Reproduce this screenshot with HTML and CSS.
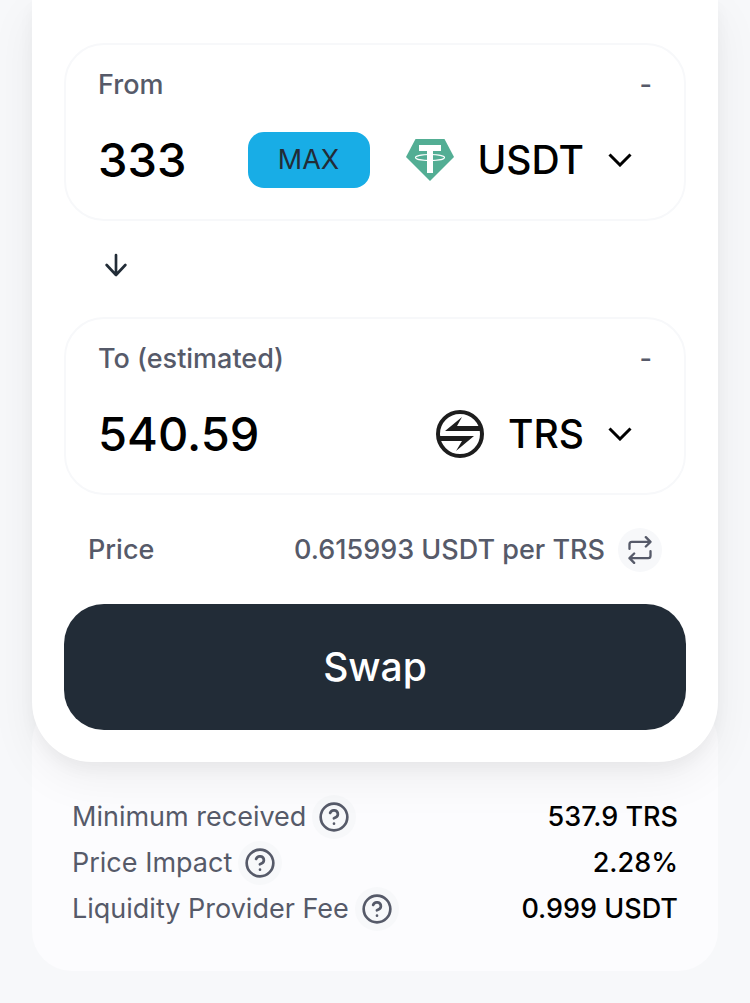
FILE: index.html
```html
<!DOCTYPE html>
<html lang="en">
<head>
    <meta charset="UTF-8">
    <meta name="viewport" content="width=device-width, initial-scale=1.0">
    <title>Swap</title>
    <link rel="stylesheet" href="styles.css">
</head>

<body>

    <!-- shared icons -->
    <svg class="sprite">
        <symbol id="question" viewBox="0 0 24 24">
            <circle cx="12" cy="12" r="10"></circle>
            <path d="M9.09 9a3 3 0 0 1 5.83 1c0 2-3 3-3 3"></path>
            <path d="M12 17h.01"></path>
        </symbol>
        <symbol id="chevron" viewBox="0 0 24 14">
            <path d="M1.5 1.5 12 12 22.5 1.5"></path>
        </symbol>
    </svg>

    <main>

        <section class="card">

            <div class="panel">
                <div class="label-row">
                    <label for="from">From</label>
                    <span>-</span>
                </div>
                <div class="input-row">
                    <input id="from" class="amount" type="text" inputmode="decimal" value="333">
                    <button class="max">MAX</button>
                    <button class="token">
                        <svg class="logo" viewBox="0 0 48 48">
                            <path fill="#53ae94" d="M9.500 3h29L48 21 24 45 0 21z"></path>
                            <path fill="#fff" d="M13 9h22v6h-8v22h-6V15h-8z"></path>
                            <ellipse cx="24" cy="21.500" rx="14.500" ry="3" fill="none" stroke="#fff" stroke-width="1.200"></ellipse>
                        </svg>
                        <span>USDT</span>
                        <svg class="chevron"><use href="#chevron"></use></svg>
                    </button>
                </div>
            </div>

            <div class="switch-row">
                <button class="switch" aria-label="Switch tokens">
                    <svg viewBox="0 0 24 24"><path d="M12 4.500v15M19 12l-7 7.500L5 12"></path></svg>
                </button>
            </div>

            <div class="panel">
                <div class="label-row">
                    <label for="to">To (estimated)</label>
                    <span>-</span>
                </div>
                <div class="input-row">
                    <input id="to" class="amount" type="text" inputmode="decimal" value="540.59">
                    <button class="token">
                        <svg class="logo" viewBox="0 0 48 48">
                            <circle cx="24" cy="24" r="22" fill="none" stroke="#1d1d1d" stroke-width="4"></circle>
                            <path fill="#1d1d1d" d="M9 21 26 7l-5 9h24v5zM38 26 20 41l6-10H3v-5z"></path>
                        </svg>
                        <span>TRS</span>
                        <svg class="chevron"><use href="#chevron"></use></svg>
                    </button>
                </div>
            </div>

            <div class="price-row">
                <span>Price</span>
                <span class="price">0.615993 USDT per TRS</span>
                <button class="round" aria-label="Invert price">
                    <svg class="repeat" viewBox="0 0 24 24">
                        <path d="m17 1 4 4-4 4M3 11V7a2 2 0 0 1 2-2h16M7 23l-4-4 4-4M21 13v4a2 2 0 0 1-2 2H3"></path>
                    </svg>
                </button>
            </div>

            <button class="swap">Swap</button>

        </section>

        <dl class="details">
            <div>
                <dt>Minimum received <button class="round" aria-label="About minimum received"><svg><use href="#question"></use></svg></button></dt>
                <dd>537.9 TRS</dd>
            </div>
            <div>
                <dt>Price Impact <button class="round" aria-label="About price impact"><svg><use href="#question"></use></svg></button></dt>
                <dd>2.28%</dd>
            </div>
            <div>
                <dt>Liquidity Provider Fee <button class="round" aria-label="About the liquidity provider fee"><svg><use href="#question"></use></svg></button></dt>
                <dd>0.999 USDT</dd>
            </div>
        </dl>

    </main>

</body>
</html>
```
FILE: styles.css
```css
* {
    box-sizing: border-box;
}

body {
    margin: 0;
    background-color: #f7f8fa;
    color: #000;
    font-family: Inter, sans-serif;
    font-size: 27px;
    font-weight: 500;
    line-height: 32px;
}

main {
    padding: 0 32px 32px;
}

button,
input {
    border: 0;
    padding: 0;
    background: none;
    color: inherit;
    font: inherit;
}

button {
    cursor: pointer;
}

svg {
    display: block;
    fill: none;
    stroke: currentColor;
    stroke-linecap: round;
    stroke-linejoin: round;
    stroke-width: 2;
}

.sprite {
    display: none;
}

.card {
    position: relative;
    padding: 43px 32px 32px;
    background-color: #fff;
    border-radius: 0 0 60px 60px;
    box-shadow: 0 0 2px rgba(0, 0, 0, 0.01), 0 8px 16px rgba(0, 0, 0, 0.04),
        0 16px 48px rgba(0, 0, 0, 0.06);
}

.panel {
    border: 2px solid #f7f8fa;
    border-radius: 40px;
    padding: 24px 32px 31px;
}

.label-row {
    display: flex;
    justify-content: space-between;
    color: #565a69;
}

.input-row {
    display: flex;
    align-items: center;
    height: 56px;
    margin-top: 31px;
    padding-right: 20px;
}

.amount {
    flex: 1;
    min-width: 0;
    font-size: 47px;
    line-height: 56px;
    outline: none;
}

.max {
    width: 122px;
    height: 56px;
    margin-right: 36px;
    border-radius: 16px;
    background-color: #18ade6;
    color: #222c37;
    font-weight: 400;
}

.token {
    display: flex;
    align-items: center;
    font-size: 39px;
    line-height: 48px;
}

.token svg {
    stroke: none;
}

.token .logo {
    width: 48px;
    height: 48px;
    margin-right: 24px;
}

.token .chevron {
    width: 24px;
    height: 14px;
    margin-left: 24px;
    stroke: #000;
    stroke-width: 3;
    stroke-linecap: butt;
    stroke-linejoin: miter;
}

.switch-row {
    display: flex;
    padding: 28px 36px 36px;
}

.switch {
    height: 32px;
    color: #222c37;
}

.switch svg {
    width: 32px;
    height: 32px;
}

.price-row {
    display: flex;
    align-items: center;
    padding: 33px 24px 32px;
    color: #565a69;
}

.price {
    margin-left: auto;
}

.round {
    display: flex;
    align-items: center;
    justify-content: center;
    width: 44px;
    height: 44px;
    margin-left: 13px;
    border-radius: 50%;
    background-color: #f7f8fa;
    color: #565a69;
}

.round svg {
    width: 32px;
    height: 32px;
}

.round .repeat {
    width: 28px;
    height: 28px;
}

.swap {
    width: 100%;
    height: 126px;
    border-radius: 40px;
    background-color: #222c37;
    color: #fff;
    font-size: 39px;
}

.details {
    margin: -60px 0 0;
    padding: 92px 40px 39px;
    border-radius: 40px;
    background-color: #fcfcfe;
}

.details div {
    display: flex;
    align-items: center;
    justify-content: space-between;
    height: 46px;
}

.details dt {
    display: flex;
    align-items: center;
    color: #565a69;
    font-weight: 400;
}

.details .round {
    margin-left: 6px;
}

.details dd {
    margin: 0;
}
```
